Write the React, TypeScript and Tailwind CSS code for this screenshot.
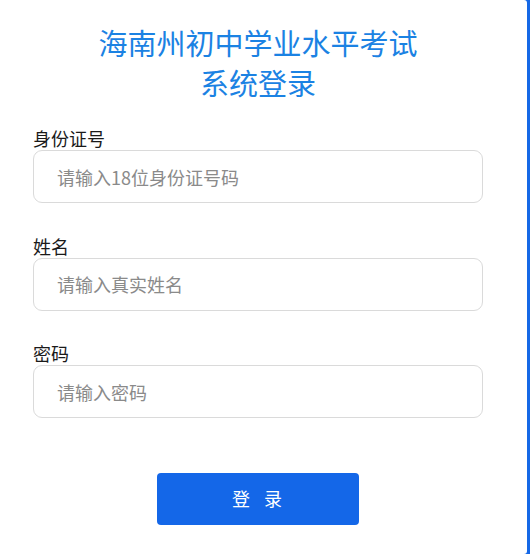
import { useState } from 'react';

const fields = [
  { name: 'idCard', label: '身份证号', placeholder: '请输入18位身份证号码', type: 'text' },
  { name: 'realName', label: '姓名', placeholder: '请输入真实姓名', type: 'text' },
  { name: 'password', label: '密码', placeholder: '请输入密码', type: 'password' },
];

const App = () => {
  const [form, setForm] = useState<Record<string, string>>({ idCard: '', realName: '', password: '' });

  return (
    <div
      className="flex h-[554px] w-[530px] bg-[#1668e6]"
      style={{ fontFamily: '"Noto Sans CJK SC", "Noto Sans", "Liberation Sans", sans-serif' }}
    >
      <div className="h-[554px] w-[527px] rounded-r-[3px] bg-white pt-[22px]">
        <div className="ml-[33px] w-[450px]">
          <h1 className="text-center text-[29px] leading-[40px] font-normal text-[#1b82e3]">
            海南州初中学业水平考试
            <br />
            系统登录
          </h1>

          <form className="mt-[24px] flex flex-col gap-[30.5px]" onSubmit={(e) => e.preventDefault()}>
            {fields.map((f) => (
              <label key={f.name} className="flex flex-col">
                <span className="h-[24px] text-[18px] leading-[24px] text-[#1a1a1a]">{f.label}</span>
                <input
                  type={f.type}
                  value={form[f.name]}
                  placeholder={f.placeholder}
                  onChange={(e) => setForm({ ...form, [f.name]: e.target.value })}
                  className="h-[53px] rounded-[9px] border border-[#dadada] bg-white px-[23px] text-[18px] text-[#333] outline-none placeholder:text-[#8a8a8a]"
                />
              </label>
            ))}

            <div className="mt-[24px] flex justify-center">
              <button
                type="submit"
                className="h-[52px] w-[202px] rounded-[4px] bg-[#1467e8] pl-[12px] text-[18px] tracking-[14px] text-white"
              >
                登录
              </button>
            </div>
          </form>
        </div>
      </div>
    </div>
  );
};

export default App;
